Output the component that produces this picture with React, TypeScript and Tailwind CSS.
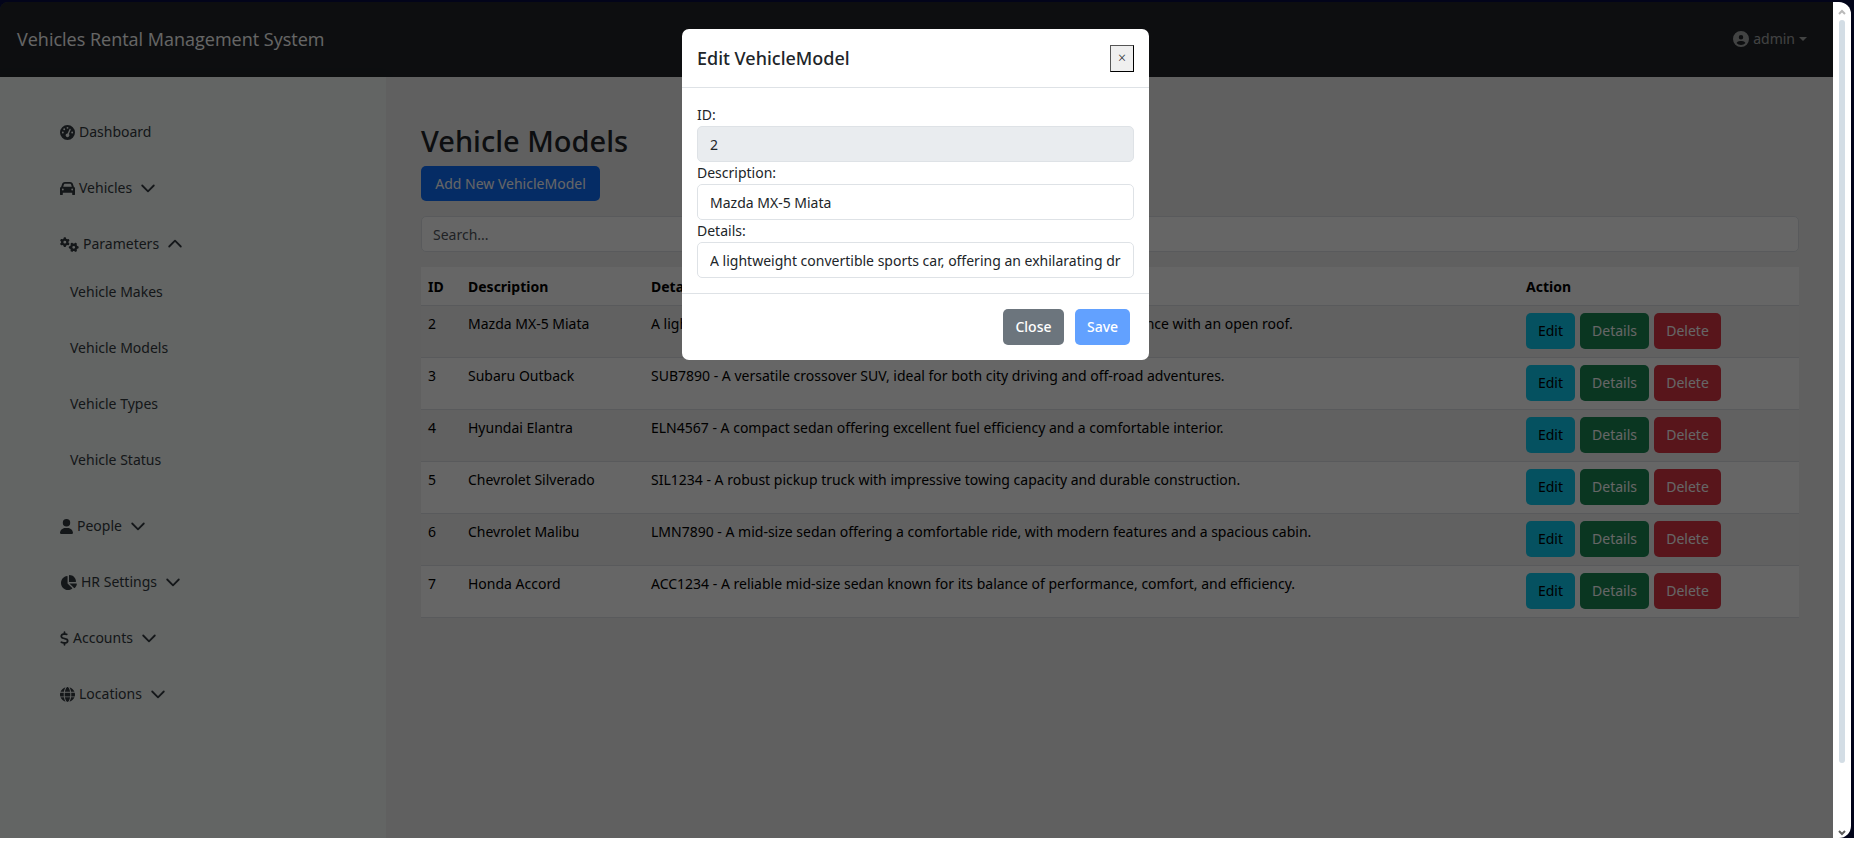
import { useState } from "react";
import {
  FaCar,
  FaChartPie,
  FaCircleUser,
  FaDollarSign,
  FaGaugeHigh,
  FaGears,
  FaGlobe,
  FaUser,
} from "react-icons/fa6";
import type { IconType } from "react-icons";

type NavItem = { label: string; icon: IconType; iconClass: string; expandable?: boolean; children?: string[] };

const NAV: NavItem[] = [
  { label: "Dashboard", icon: FaGaugeHigh, iconClass: "w-[15px]" },
  { label: "Vehicles", icon: FaCar, iconClass: "w-[15px]", expandable: true },
  {
    label: "Parameters",
    icon: FaGears,
    iconClass: "w-[19px]",
    expandable: true,
    children: ["Vehicle Makes", "Vehicle Models", "Vehicle Types", "Vehicle Status"],
  },
  { label: "People", icon: FaUser, iconClass: "w-[13px]", expandable: true },
  { label: "HR Settings", icon: FaChartPie, iconClass: "w-[17px]", expandable: true },
  { label: "Accounts", icon: FaDollarSign, iconClass: "w-[9px]", expandable: true },
  { label: "Locations", icon: FaGlobe, iconClass: "w-[15px]", expandable: true },
];

const MODELS = [
  { id: 2, name: "Mazda MX-5 Miata", details: "A lightweight convertible sports car, offering an exhilarating driving experience with an open roof." },
  { id: 3, name: "Subaru Outback", details: "SUB7890 - A versatile crossover SUV, ideal for both city driving and off-road adventures." },
  { id: 4, name: "Hyundai Elantra", details: "ELN4567 - A compact sedan offering excellent fuel efficiency and a comfortable interior." },
  { id: 5, name: "Chevrolet Silverado", details: "SIL1234 - A robust pickup truck with impressive towing capacity and durable construction." },
  { id: 6, name: "Chevrolet Malibu", details: "LMN7890 - A mid-size sedan offering a comfortable ride, with modern features and a spacious cabin." },
  { id: 7, name: "Honda Accord", details: "ACC1234 - A reliable mid-size sedan known for its balance of performance, comfort, and efficiency." },
];

function Chevron({ up = false }: { up?: boolean }) {
  return (
    <svg viewBox="0 0 16 16" className="ml-2 h-4 w-4" fill="none" stroke="currentColor" strokeWidth="1.8" strokeLinecap="round" strokeLinejoin="round" aria-hidden="true">
      <path d={up ? "M2.2 10.5 8 4.7 13.8 10.5" : "M2.2 5.5 8 11.3 13.8 5.5"} />
    </svg>
  );
}

function Sidebar() {
  return (
    <nav className="w-[386px] shrink-0 bg-[#f7fcfa] pt-[27px] pl-[60px] text-[#343a40] shadow-[0_0_10px_rgba(0,0,0,0.1)]">
      <ul>
        {NAV.map(({ label, icon: Icon, iconClass, expandable, children }) => (
          <li key={label}>
            <a href="#" className="flex h-14 items-center">
              <Icon className={`mr-1 h-[15px] ${iconClass}`} />
              {label}
              {expandable && <Chevron up={!!children} />}
            </a>
            {children && (
              <ul className="-mt-2 mb-[10px] pl-[10px]">
                {children.map((c) => (
                  <li key={c}>
                    <a href="#" className="flex h-14 items-center">{c}</a>
                  </li>
                ))}
              </ul>
            )}
          </li>
        ))}
      </ul>
    </nav>
  );
}

function ModelsTable() {
  return (
    <table className="mt-[15px] w-full table-fixed bg-white text-left text-black">
      <colgroup>
        <col className="w-[40px]" />
        <col className="w-[183px]" />
        <col />
        <col className="w-[280px]" />
      </colgroup>
      <thead>
        <tr className="h-[38px] border-b border-[#dee2e6]">
          {["ID", "Description", "Details", "Action"].map((h) => (
            <th key={h} className="px-[7px] pt-[2px] font-bold">{h}</th>
          ))}
        </tr>
      </thead>
      <tbody>
        {MODELS.map((m) => (
          <tr key={m.id} className="h-[52px] border-b border-[#dee2e6] align-top odd:bg-[#f2f2f2]">
            <td className="px-[7px] pt-2">{m.id}</td>
            <td className="px-[7px] pt-2">{m.name}</td>
            <td className="px-[7px] pt-2">{m.details}</td>
            <td className="px-[7px] pt-[7px]">
              <div className="flex gap-[5px]">
                <button className="h-9 w-[49px] rounded-[5px] bg-[#0dcaf0]">Edit</button>
                <button className="h-9 w-[69px] rounded-[5px] bg-[#198754] text-white">Details</button>
                <button className="h-9 w-[67px] rounded-[5px] bg-[#dc3545] text-white">Delete</button>
              </div>
            </td>
          </tr>
        ))}
      </tbody>
    </table>
  );
}

function Field({ id, label, value, disabled = false }: { id: string; label: string; value: string; disabled?: boolean }) {
  return (
    <div>
      <label htmlFor={id} className="block h-[22px] leading-[22px]">{label}</label>
      <input
        id={id}
        defaultValue={value}
        disabled={disabled}
        className="block h-9 w-full rounded-[5px] border border-[#dee2e6] bg-white px-3 disabled:bg-[#e9ecef]"
      />
    </div>
  );
}

function EditDialog({ onClose }: { onClose: () => void }) {
  return (
    <div role="dialog" aria-modal="true" aria-labelledby="dialog-title" className="w-[467px] rounded-[7px] bg-white text-[#212529]">
      <div className="flex h-[59px] items-center justify-between border-b border-[#dee2e6] px-[15px]">
        <h5 id="dialog-title" className="text-lg font-medium">Edit VehicleModel</h5>
        <button onClick={onClose} aria-label="Close dialog" className="h-[27px] w-6 border border-t-[#555] border-r-black border-b-black border-l-[#555] bg-[#efefef] text-sm font-light">×</button>
      </div>
      <div className="px-[15px] pt-4 pb-[15px]">
        <Field id="model-id" label="ID:" value="2" disabled />
        <Field id="model-description" label="Description:" value="Mazda MX-5 Miata" />
        <Field id="model-details" label="Details:" value={MODELS[0].details} />
      </div>
      <div className="flex h-[67px] items-center justify-end gap-[11px] border-t border-[#dee2e6] pr-[19px]">
        <button onClick={onClose} className="h-9 w-[61px] rounded-[5px] bg-[#6c757d] font-medium text-white">Close</button>
        <button className="h-9 w-[55px] rounded-[5px] bg-[#62a1ff] font-medium text-white">Save</button>
      </div>
    </div>
  );
}

function ScrollRail() {
  return (
    <div className="flex w-[18px] shrink-0 flex-col items-center rounded-r-[12px] bg-white pt-[6px] pb-[1px]">
      <svg viewBox="0 0 8 8" className="h-2 w-2" fill="none" stroke="#b9b9b9" strokeWidth="2" aria-hidden="true"><path d="M1 6 4 3 7 6" /></svg>
      <div className="mt-1 w-[6px] flex-[744] rounded-full bg-[#d3dde5]" />
      <div className="flex-[66]" />
      <svg viewBox="0 0 8 8" className="h-2 w-2" fill="none" stroke="#5c5c5c" strokeWidth="2" aria-hidden="true"><path d="M1 2 4 5 7 2" /></svg>
    </div>
  );
}

export default function App() {
  const [open, setOpen] = useState(true);
  return (
    <div className="flex h-screen flex-col bg-white pb-[5px] font-['Noto_Sans',sans-serif] text-sm">
      <div className="flex min-h-0 flex-1 bg-[#02041a] pt-[2px] pr-[3px]">
        <div className="relative flex min-w-0 flex-1 flex-col overflow-hidden rounded-tl-[8px]">
          <header className="flex h-[75px] shrink-0 items-center justify-between bg-[#212529] pr-[26px] pb-[2px] pl-[17px] text-white">
            <a href="#" className="font-['Open_Sans',sans-serif] text-lg">Vehicles Rental Management System</a>
            <button className="flex items-center text-white/60">
              <FaCircleUser className="mr-1 h-4 w-4" />
              admin
              <svg viewBox="0 0 8 4" className="ml-1 h-1 w-2" fill="currentColor" aria-hidden="true"><path d="M0 0h8L4 4z" /></svg>
            </button>
          </header>
          <div className="flex min-h-0 flex-1">
            <Sidebar />
            <main className="min-w-0 flex-1 bg-[#f0f0f0] pt-11 pr-[34px] pl-[35px]">
              <h1 className="text-[29px] leading-10 font-medium text-[#212529]">Vehicle Models</h1>
              <button className="mt-[5px] h-[35px] w-[179px] rounded-[5px] bg-[#0d6efd] text-white">Add New VehicleModel</button>
              <input aria-label="Search" placeholder="Search..." className="mt-[15px] block h-9 w-full rounded-[5px] border border-[#dee2e6] bg-white px-[11px] placeholder:text-[#50565c]" />
              <ModelsTable />
            </main>
          </div>
          {open && (
            <div className="absolute inset-0 z-10 flex items-start justify-center bg-black/60 pt-[27px] pr-[2px]">
              <EditDialog onClose={() => setOpen(false)} />
            </div>
          )}
        </div>
        <ScrollRail />
      </div>
    </div>
  );
}
